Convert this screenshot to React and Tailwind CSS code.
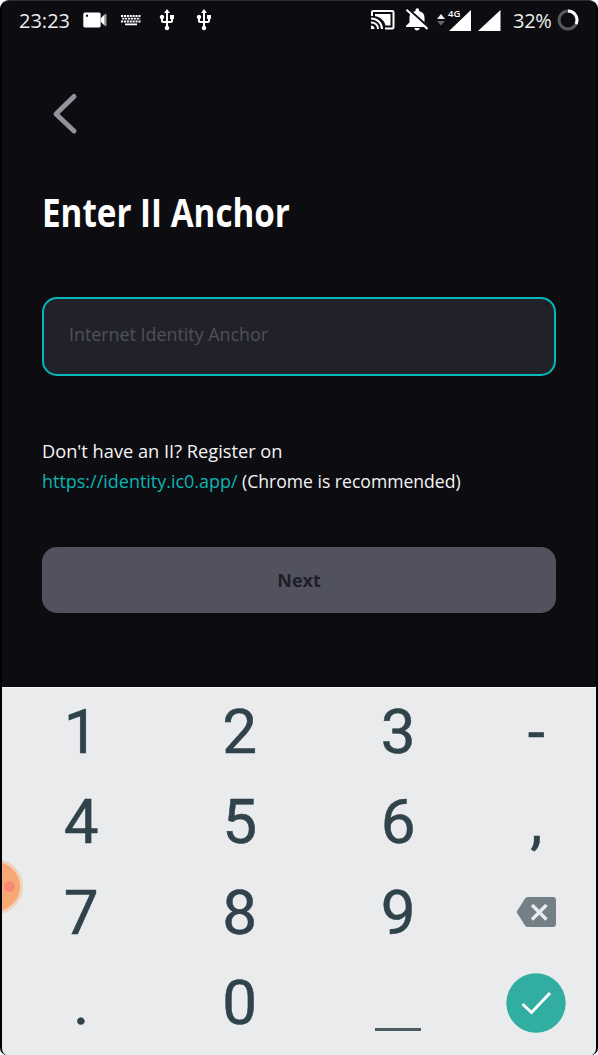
import { MdUsb } from "react-icons/md";

const keys = ["1", "2", "3", "-", "4", "5", "6", ",", "7", "8", "9", "back", ".", "0", "_", "done"];

function Camera() {
  return (
    <svg className="h-4 w-6" viewBox="0 0 24 16">
      <path fill="#fff" fillRule="evenodd" d="M2 .5h14a1.700 1.700 0 0 1 1.700 1.700v11.600a1.700 1.700 0 0 1-1.700 1.700H2a1.700 1.700 0 0 1-1.700-1.700V2.200A1.700 1.700 0 0 1 2 .5Zm1 2.200v2h2v-2Z" />
      <path fill="#fff" d="m18 6 3.700-3.800v11.600L18 10Z" />
      <path fill="#999" d="M22 2h1.500v12H22Z" />
    </svg>
  );
}

function Keyboard() {
  return (
    <svg className="h-3 w-5" viewBox="0 0 20 12" stroke="#fff" fill="none">
      <path strokeWidth="1.8" strokeDasharray="2.1 .8" d="M0 2h20M0 7.5h20" />
      <path strokeWidth="1.8" strokeDasharray="2.1 .8" d="M1.2 4.7h18" />
      <path strokeWidth="1.7" d="M4 10.3h12" />
    </svg>
  );
}

function BellOff() {
  return (
    <svg className="ml-[9px] h-6 w-[26px] shrink-0" viewBox="0 0 26 24">
      <path fill="#fff" d="M11.500 3V2a1.800 1.800 0 0 1 3.600 0v1c3.600.8 5.400 3.300 5.400 6.500v5l3 3.200V19H2v-1.300l3.500-3.200v-5C5.500 6.300 7.800 3.800 11.500 3ZM10.300 20h5.400c0 3.200-5.400 3.200-5.400 0Z" />
      <path stroke="#0d0c11" strokeWidth="2" d="M4.300 1 25.500 20" />
      <path stroke="#fff" strokeWidth="2" d="M2.500 1.800 23.500 21" />
    </svg>
  );
}

function StatusBar() {
  return (
    <header className="mb-[2px] flex h-[38px] items-center pl-[17px] font-['Open_Sans',sans-serif] text-[20px] leading-none text-[#eee]">
      <span className="w-16 pt-px">23:23</span>
      <Camera />
      <span className="ml-[14px]"><Keyboard /></span>
      <MdUsb className="ml-[14px] size-6 text-white" />
      <MdUsb className="ml-[13px] size-6 text-white" />
      <svg className="ml-[155px] h-5 w-6 shrink-0" viewBox="0 0 24 20" fill="none" stroke="#fff">
        <path strokeWidth="2" d="M1 6V2.2C1 1.5 1.5 1 2.2 1h19.1c.7 0 1.2.5 1.2 1.2v15.1c0 .7-.5 1.2-1.2 1.2H14" />
        <path fill="#fff" stroke="none" d="M4 4h15.5v11.5h-5C13.5 10.5 9 6.8 4 6.3Z" />
        <path strokeWidth="2" d="M0 8.5c6 0 11 4.5 11 10.5M0 12.5c4 0 7 2.5 7 6.5" />
        <path fill="#fff" stroke="none" d="M0 15.5c2 0 3.5 1.5 3.5 3.5H0Z" />
      </svg>
      <BellOff />
      <svg className="ml-[7px] h-3 w-2 shrink-0" viewBox="0 0 8 12">
        <path fill="#eee" d="m0 5 4-5 4 5Z" /><path fill="#666" d="m0 7 4 4.5L8 7Z" />
      </svg>
      <svg className="ml-[2px] h-6 w-[55px] shrink-0" viewBox="0 0 55 24">
        <path fill="#fff" d="M24 2v21H2ZM53.500 2v21H31Z" />
        <text x="1" y="8.500" fill="#fff" stroke="#0d0c11" strokeWidth="2" paintOrder="stroke" fontSize="9.500" fontWeight="600" fontFamily="Open Sans, sans-serif">4G</text>
      </svg>
      <span className="ml-[11px] w-[44px] pt-px tracking-[-0.3px]">32%</span>
      <svg className="size-[22px] shrink-0" viewBox="0 0 22 22" fill="none" strokeWidth="3">
        <circle cx="11" cy="11" r="9" stroke="#59595c" /><path stroke="#fff" d="M11 2a9 9 0 0 1 8 13" />
      </svg>
    </header>
  );
}

function Key({ value }) {
  if (value === "back") {
    return (
      <svg className="mb-[4px] h-[30px] w-10" viewBox="0 0 40 30">
        <path fill="#738186" d="M12 0h25a3 3 0 0 1 3 3v24a3 3 0 0 1-3 3H12q-2 0-3-1.500L.5 15 9 1.500Q10 0 12 0Z" />
        <path stroke="#e9ebed" strokeWidth="3.300" d="m16 8 14.500 14.500M30.500 8 16 22.500" />
      </svg>
    );
  }
  if (value === "done") {
    return (
      <svg className="mb-[2px] size-[60px]" viewBox="0 0 60 60">
        <circle cx="30" cy="30" r="29.700" fill="#31ada1" />
        <path fill="none" stroke="#fff" strokeWidth="3" d="m16.500 31 9 8.500 18.500-19.500" />
      </svg>
    );
  }
  if (value === "_") return <span className="mt-[50px] h-[2.500px] w-[46px] bg-[#4b5c63]" />;
  return <span className="pb-[2px] [-webkit-text-stroke:0.500px_#30424a]">{value}</span>;
}

export default function App() {
  return (
    <div className="h-[1055px] w-[598px] bg-white">
      <main className="relative flex h-full flex-col overflow-hidden rounded-t-[9px] rounded-b-[7px] border-x-2 border-t border-x-black border-t-[#2b2b30] bg-[#0d0c11]">
        <StatusBar />
        <section className="flex h-[646px] shrink-0 flex-col px-10 font-['Open_Sans',sans-serif]">
          <svg className="mt-[53px] ml-[10px] h-10 w-6 overflow-visible" viewBox="0 0 24 40" fill="none">
            <path d="M22 2.500 4 20 22 37" stroke="#94929c" strokeWidth="5" strokeLinecap="round" strokeLinejoin="round" />
          </svg>
          <h1 className="mt-[49px] h-[58px] origin-left scale-x-[0.862] text-[38.500px] leading-[58px] font-bold whitespace-nowrap text-white">Enter II Anchor</h1>
          <div className="mt-[56px] h-[79px] shrink-0 rounded-[15px] border-2 border-[#06b9b8] bg-[#21212a] pl-[24.500px]">
            <span className="inline-block origin-left scale-x-[0.965] text-[18.500px] leading-[69px] whitespace-nowrap text-[#50505d]">Internet Identity Anchor</span>
          </div>
          <div className="mt-[60px] flex h-[60px] flex-col text-[18.500px] leading-[30px] whitespace-nowrap text-[#f4f4f5]">
            <p className="origin-left scale-x-[0.985]">Don&apos;t have an II? Register on</p>
            <p className="flex">
              <a className="w-[200px] origin-left scale-x-[0.971] text-[#0bb5b3]">https://identity.ic0.app/</a>
              <span className="origin-left scale-x-[0.95]">(Chrome is recommended)</span>
            </p>
          </div>
          <button className="mt-[51px] h-[66px] shrink-0 rounded-[15px] bg-[#51525e] pt-px text-[18px] font-bold text-[#1e1e28]">Next</button>
        </section>
        <section className="grid flex-1 grid-cols-[158.500px_158.500px_158.500px_1fr] grid-rows-[89.700px_90.700px_90.700px_90.700px] border-t border-[#f8f8f8] bg-[#e9ebed] pr-[1px] font-['Roboto',sans-serif] text-[62px] leading-none text-[#30424a]">
          {keys.map((key) => <div className="flex items-center justify-center" key={key}><Key value={key} /></div>)}
        </section>
        <div className="absolute top-[858px] left-[-34px] size-[55px] rounded-full border-[3px] border-[#f0d3bd] bg-[#f8a873]">
          <span className="absolute top-[19px] right-[5px] size-[11px] rounded-full bg-[#f98878]" />
        </div>
      </main>
    </div>
  );
}
